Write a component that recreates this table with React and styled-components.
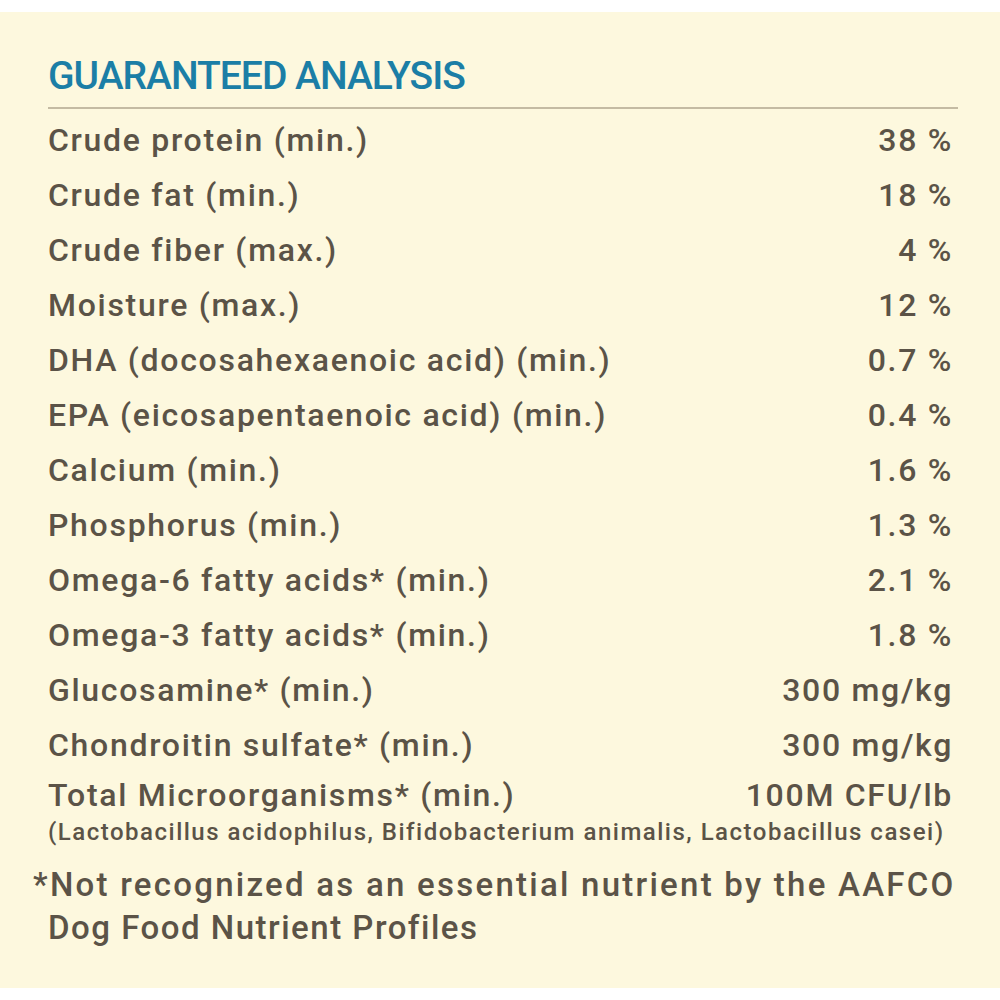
import React from "react";
import styled, { createGlobalStyle } from "styled-components";

const GlobalStyle = createGlobalStyle`
  html, body {
    margin: 0;
    padding: 0;
    background: #ffffff;
  }
  body {
    font-family: Roboto, "Liberation Sans", sans-serif;
  }
`;

const Panel = styled.div`
  margin-top: 12px;
  height: 976px;
  box-sizing: border-box;
  background: #fdf8de;
  padding: 45px 47px 0 48px;
  color: #5b5347;
`;

const Title = styled.h1`
  margin: 0;
  font-size: 39px;
  line-height: 39px;
  font-weight: 500;
  color: #1b7ea6;
  letter-spacing: -1px;
`;

const Divider = styled.div`
  margin-top: 11px;
  height: 2px;
  margin-right: -5px;
  background: #c4bba3;
`;

const List = styled.div`
  margin-top: 4px;
  display: flex;
  flex-direction: column;
`;

const Row = styled.div`
  display: flex;
  justify-content: space-between;
  height: ${(p) => (p.$tight ? "44px" : "55px")};
  line-height: ${(p) => (p.$tight ? "44px" : "55px")};
  font-size: 32px;
  font-weight: 500;
  letter-spacing: 1.7px;
  white-space: nowrap;
`;

const Sub = styled.div`
  font-size: 24px;
  line-height: 30px;
  font-weight: 500;
  letter-spacing: 1.5px;
  white-space: nowrap;
`;

const Footnote = styled.div`
  margin-top: 16px;
  font-size: 33px;
  line-height: 43px;
  font-weight: 500;
  white-space: nowrap;
`;

const FootLine = styled.span`
  display: block;
  margin-left: ${(p) => (p.$spread ? "-15px" : "0")};
  letter-spacing: ${(p) => (p.$spread ? "2.25px" : "1.5px")};
`;

const rows = [
  ["Crude protein (min.)", "38 %"],
  ["Crude fat (min.)", "18 %"],
  ["Crude fiber (max.)", "4 %"],
  ["Moisture (max.)", "12 %"],
  ["DHA (docosahexaenoic acid) (min.)", "0.7 %"],
  ["EPA (eicosapentaenoic acid) (min.)", "0.4 %"],
  ["Calcium (min.)", "1.6 %"],
  ["Phosphorus (min.)", "1.3 %"],
  ["Omega-6 fatty acids* (min.)", "2.1 %"],
  ["Omega-3 fatty acids* (min.)", "1.8 %"],
  ["Glucosamine* (min.)", "300 mg/kg"],
  ["Chondroitin sulfate* (min.)", "300 mg/kg"],
];

export default function App() {
  return (
    <>
      <GlobalStyle />
      <Panel>
        <Title>GUARANTEED ANALYSIS</Title>
        <Divider />
        <List>
          {rows.map(([label, value]) => (
            <Row key={label}>
              <span>{label}</span>
              <span>{value}</span>
            </Row>
          ))}
          <Row $tight>
            <span>Total Microorganisms* (min.)</span>
            <span>100M CFU/lb</span>
          </Row>
          <Sub>
            (Lactobacillus acidophilus, Bifidobacterium animalis, Lactobacillus casei)
          </Sub>
        </List>
        <Footnote>
          <FootLine $spread>*Not recognized as an essential nutrient by the AAFCO</FootLine>
          <FootLine>Dog Food Nutrient Profiles</FootLine>
        </Footnote>
      </Panel>
    </>
  );
}
